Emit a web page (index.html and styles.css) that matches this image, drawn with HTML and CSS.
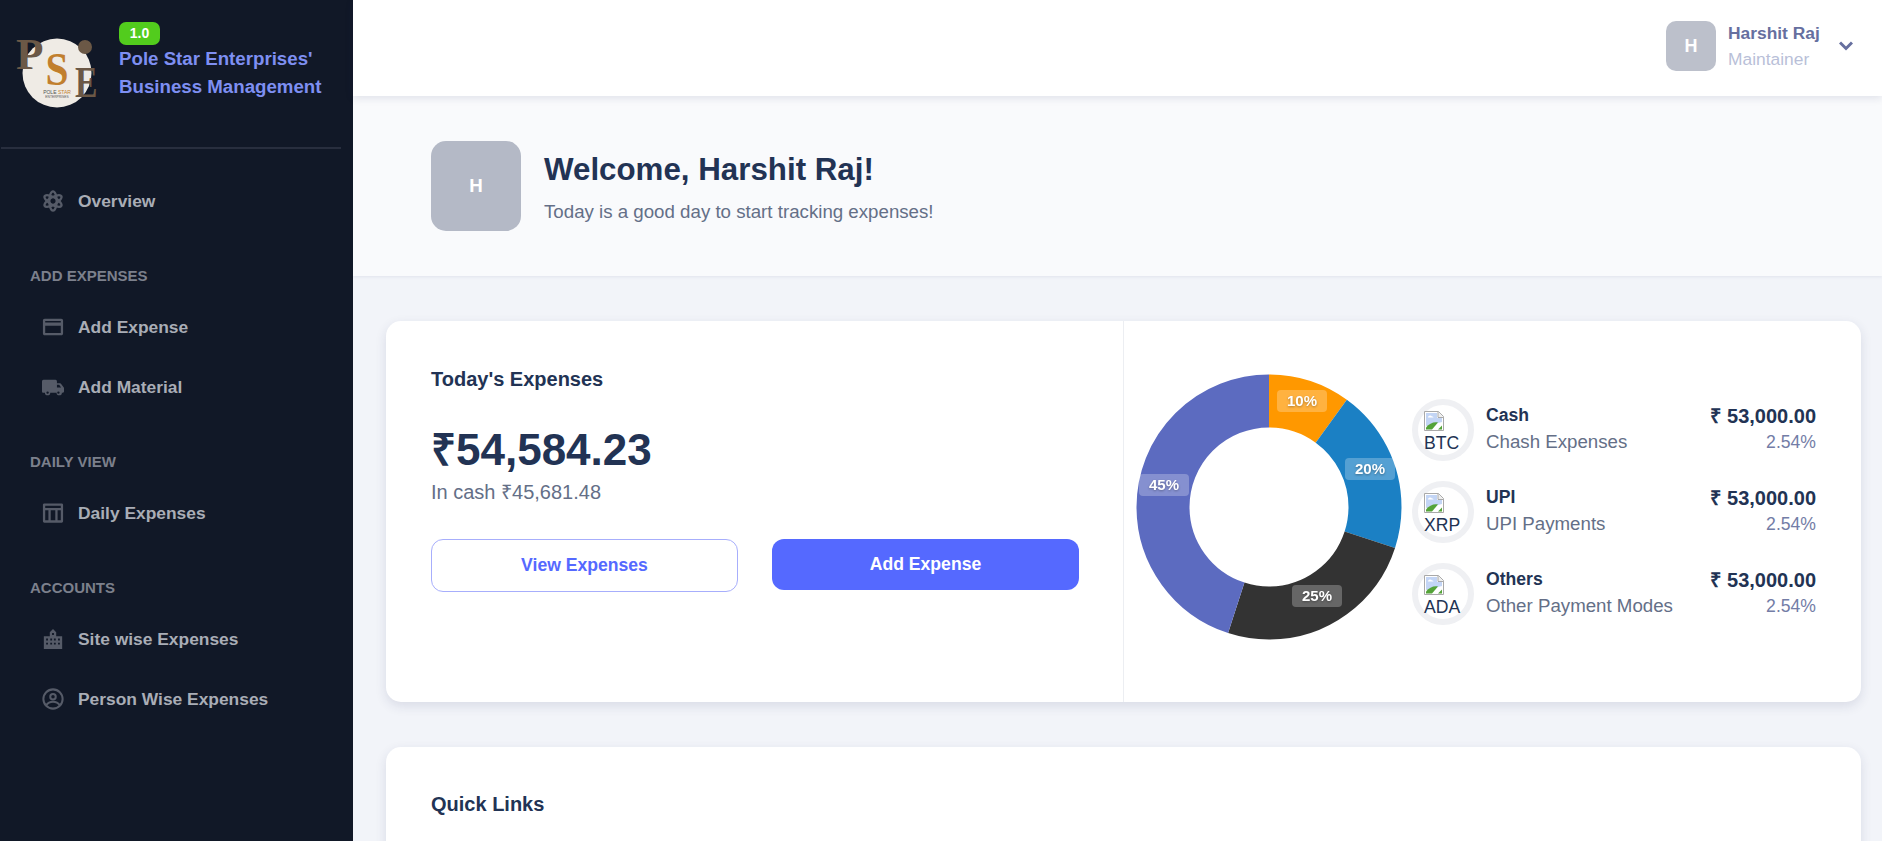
FILE: index.html
```html
<!DOCTYPE html>
<html>
	<head>
		<meta charset="utf-8">
		<title>Pole Star Enterprises' Business Management</title>
		<link rel="stylesheet" href="styles.css">
	</head>
	<body>
		<div class="sidebar">
			<div class="brand">
				<svg class="logo" width="84" height="78" viewBox="0 0 84 78">
					<circle cx="41" cy="41" r="34.5" fill="#efebe5"/>
					<circle cx="69" cy="15" r="7" fill="#6b5846"/>
					<text x="0" y="37" class="logo-big">P</text>
					<text transform="translate(59 65) scale(.75 1)" class="logo-big">E</text>
					<text transform="translate(41 53) scale(.9 1)" class="logo-s">S</text>
					<text x="41" y="62" class="logo-pole">POLE <tspan fill="#c17f2e">STAR</tspan></text>
					<text x="41" y="66" class="logo-ent">ENTERPRISES</text>
				</svg>
				<div class="brand-text">
					<span class="version">1.0</span>
					<div class="brand-name">Pole Star Enterprises'<br>Business Management</div>
				</div>
			</div>
			<div class="side-line"></div>

			<a href="#" class="nav-item first">
				<svg class="nav-icon" viewBox="0 0 24 24" fill="none" stroke="currentColor" stroke-width="2.500">
					<ellipse cx="12" cy="12" rx="4" ry="10.500"/>
					<ellipse cx="12" cy="12" rx="4" ry="10.500" transform="rotate(60 12 12)"/>
					<ellipse cx="12" cy="12" rx="4" ry="10.500" transform="rotate(120 12 12)"/>
				</svg>
				Overview
			</a>

			<div class="nav-label">ADD EXPENSES</div>
			<a href="#" class="nav-item">
				<svg class="nav-icon" viewBox="0 0 24 24" fill="currentColor"><path fill-rule="evenodd" d="M3 3h18c1.200 0 2 .8 2 2v14c0 1.200-.8 2-2 2H3c-1.200 0-2-.8-2-2V5c0-1.200.8-2 2-2zm.5 2.500V7h17V5.500h-17zm0 5v8h17v-8h-17z"/></svg>
				Add Expense
			</a>
			<a href="#" class="nav-item">
				<svg class="nav-icon" viewBox="0 0 24 24" fill="currentColor"><path d="M0 6c0-1 .7-1.800 1.700-1.800h13c1 0 1.600.8 1.600 1.800v2h3.400c.5 0 .9.200 1.200.6l2.700 3.700c.2.300.4.600.4 1V17c0 .7-.5 1.200-1.200 1.200h-1.100a2.900 2.900 0 0 1-5.800 0H9a2.900 2.900 0 0 1-5.800 0H1.400C.6 18.200 0 17.600 0 16.800V6zm16.300 3.600v3h4.500l-2.100-3h-2.400zM6.100 19.400a1.300 1.300 0 1 0 0-2.600 1.300 1.300 0 0 0 0 2.600zm11.800 0a1.300 1.300 0 1 0 0-2.600 1.300 1.300 0 0 0 0 2.600z" fill-rule="evenodd"/></svg>
				Add Material
			</a>

			<div class="nav-label">DAILY VIEW</div>
			<a href="#" class="nav-item">
				<svg class="nav-icon" viewBox="0 0 24 24" fill="currentColor"><path fill-rule="evenodd" d="M2.500 1.500h19c.8 0 1.500.7 1.500 1.500v18c0 .8-.7 1.500-1.500 1.500h-19c-.8 0-1.500-.7-1.500-1.500V3c0-.8.7-1.500 1.500-1.500zM3.500 4v2.500h17V4h-17zm0 5v11h3.500V9H3.500zm6 0v11h5V9h-5zm7.500 0v11h3.500V9H17z"/></svg>
				Daily Expenses
			</a>

			<div class="nav-label">ACCOUNTS</div>
			<a href="#" class="nav-item">
				<svg class="nav-icon" viewBox="0 0 24 24" fill="currentColor"><path fill-rule="evenodd" d="M12 1l3.500 3.500V9H22v14H2V9h6.500V4.500L12 1zM11 5.500v2h2v-2h-2zM4.500 11.500v2h2v-2h-2zm4.500 0v2h2v-2H9zm4 0v2h2v-2h-2zm4.500 0v2h2v-2h-2zM4.500 16v2h2v-2h-2zM9 16v2h2v-2H9zm4 0v2h2v-2h-2zm4.500 0v2h2v-2h-2z"/></svg>
				Site wise Expenses
			</a>
			<a href="#" class="nav-item">
				<svg class="nav-icon" viewBox="0 0 24 24" fill="none" stroke="currentColor" stroke-width="2.200">
					<circle cx="12" cy="12" r="10.500"/>
					<circle cx="12" cy="9.500" r="3"/>
					<path d="M4.500 19c2-3 4.500-4 7.500-4s5.500 1 7.500 4"/>
				</svg>
				Person Wise Expenses
			</a>
		</div>

		<div class="main">
			<div class="topbar">
				<div class="user-avatar">H</div>
				<div class="user-text">
					<div class="user-name">Harshit Raj</div>
					<div class="user-role">Maintainer</div>
				</div>
				<svg class="chevron" width="14" height="10" viewBox="0 0 14 10" fill="none" stroke="currentColor" stroke-width="3"><path d="M1 1.500l6 6 6-6"/></svg>
			</div>

			<div class="welcome">
				<div class="welcome-avatar">H</div>
				<div>
					<h1 class="welcome-title">Welcome, Harshit Raj!</h1>
					<p class="welcome-sub">Today is a good day to start tracking expenses!</p>
				</div>
			</div>

			<div class="content">
				<div class="card expenses-card">
					<div class="today">
						<h2 class="card-title">Today's Expenses</h2>
						<div class="amount">₹54,584.23</div>
						<div class="in-cash">In cash ₹45,681.48</div>
						<div class="buttons">
							<a href="#" class="btn btn-outline">View Expenses</a>
							<a href="#" class="btn btn-solid">Add Expense</a>
						</div>
					</div>
					<div class="breakdown">
						<svg class="donut" width="266" height="266" viewBox="0 0 266 266">
							<g transform="rotate(-90 133 133)" fill="none" stroke-width="53">
								<circle cx="133" cy="133" r="106" pathLength="100" stroke="#ff9800" stroke-dasharray="10 90"/>
								<circle cx="133" cy="133" r="106" pathLength="100" stroke="#1b80c4" stroke-dasharray="20 80" stroke-dashoffset="-10"/>
								<circle cx="133" cy="133" r="106" pathLength="100" stroke="#333333" stroke-dasharray="25 75" stroke-dashoffset="-30"/>
								<circle cx="133" cy="133" r="106" pathLength="100" stroke="#5c6bc0" stroke-dasharray="45 55" stroke-dashoffset="-55"/>
							</g>
							<rect class="tag" x="141" y="16" width="50" height="22" rx="4"/>
							<text class="tag-text" x="166" y="32">10%</text>
							<rect class="tag" x="209" y="84" width="50" height="22" rx="4"/>
							<text class="tag-text" x="234" y="100">20%</text>
							<rect class="tag" x="156" y="211" width="50" height="22" rx="4"/>
							<text class="tag-text" x="181" y="227">25%</text>
							<rect class="tag" x="3" y="100" width="50" height="22" rx="4"/>
							<text class="tag-text" x="28" y="116">45%</text>
						</svg>
						<div class="modes">
							<div class="mode">
								<div class="mode-ring">
									<svg class="broken" width="20" height="20" viewBox="0 0 20 20">
										<path d="M.5.500h14l5 5v14H.5z" fill="#fff" stroke="#a9a9a9"/>
										<path d="M14 .5v6h5.500" fill="#eee" stroke="#a9a9a9"/>
										<path d="M2 2h11v5h5v4L2 15z" fill="#c3d5f5"/>
										<path d="M2 18.500v-2c3-4 8-6 12-5l-6 7z" fill="#54a338"/>
										<path d="M14 18.500l4-4v4z" fill="#54a338"/>
										<path d="M4 6c1-2 3-2 4-.5 1 0 1.500.5 1.500 1H4z" fill="#fff"/>
									</svg>
									<div class="alt">BTC</div>
								</div>
								<div class="mode-text">
									<div class="mode-name">Cash</div>
									<div class="mode-sub">Chash Expenses</div>
								</div>
								<div class="mode-nums">
									<div class="mode-amount">₹ 53,000.00</div>
									<div class="mode-pct">2.54%</div>
								</div>
							</div>
							<div class="mode">
								<div class="mode-ring">
									<svg class="broken" width="20" height="20" viewBox="0 0 20 20">
										<path d="M.5.500h14l5 5v14H.5z" fill="#fff" stroke="#a9a9a9"/>
										<path d="M14 .5v6h5.500" fill="#eee" stroke="#a9a9a9"/>
										<path d="M2 2h11v5h5v4L2 15z" fill="#c3d5f5"/>
										<path d="M2 18.500v-2c3-4 8-6 12-5l-6 7z" fill="#54a338"/>
										<path d="M14 18.500l4-4v4z" fill="#54a338"/>
										<path d="M4 6c1-2 3-2 4-.5 1 0 1.500.5 1.500 1H4z" fill="#fff"/>
									</svg>
									<div class="alt">XRP</div>
								</div>
								<div class="mode-text">
									<div class="mode-name">UPI</div>
									<div class="mode-sub">UPI Payments</div>
								</div>
								<div class="mode-nums">
									<div class="mode-amount">₹ 53,000.00</div>
									<div class="mode-pct">2.54%</div>
								</div>
							</div>
							<div class="mode">
								<div class="mode-ring">
									<svg class="broken" width="20" height="20" viewBox="0 0 20 20">
										<path d="M.5.500h14l5 5v14H.5z" fill="#fff" stroke="#a9a9a9"/>
										<path d="M14 .5v6h5.500" fill="#eee" stroke="#a9a9a9"/>
										<path d="M2 2h11v5h5v4L2 15z" fill="#c3d5f5"/>
										<path d="M2 18.500v-2c3-4 8-6 12-5l-6 7z" fill="#54a338"/>
										<path d="M14 18.500l4-4v4z" fill="#54a338"/>
										<path d="M4 6c1-2 3-2 4-.5 1 0 1.500.5 1.500 1H4z" fill="#fff"/>
									</svg>
									<div class="alt">ADA</div>
								</div>
								<div class="mode-text">
									<div class="mode-name">Others</div>
									<div class="mode-sub">Other Payment Modes</div>
								</div>
								<div class="mode-nums">
									<div class="mode-amount">₹ 53,000.00</div>
									<div class="mode-pct">2.54%</div>
								</div>
							</div>
						</div>
					</div>
				</div>

				<div class="card links-card">
					<h2 class="card-title">Quick Links</h2>
				</div>
			</div>
		</div>
	</body>
</html>
```

FILE: styles.css
```css
* {
	box-sizing: border-box;
}
html, body {
	height: 100%;
	overflow: hidden;
}
body {
	margin: 0;
	display: flex;
	font-family: "Liberation Sans", Arial, sans-serif;
	color: #223354;
	background: #f2f4f9;
}
h1, h2, p {
	margin: 0;
}
a {
	text-decoration: none;
}

.sidebar {
	width: 353px;
	flex: none;
	height: 100%;
	background: #111827;
}
.brand {
	height: 147px;
	display: flex;
	padding: 22px 0 0 16px;
}
.logo {
	margin-top: 10px;
	margin-right: 19px;
	flex: none;
	overflow: visible;
}
.logo-big {
	font-family: "Liberation Serif", serif;
	font-weight: bold;
	font-size: 45px;
	fill: #6b5846;
}
.logo-s {
	font-family: "Liberation Serif", serif;
	font-weight: bold;
	font-size: 46px;
	fill: #c17f2e;
	text-anchor: middle;
}
.logo-pole {
	font-size: 5px;
	fill: #555;
	text-anchor: middle;
}
.logo-ent {
	font-size: 3.300px;
	fill: #555;
	text-anchor: middle;
}
.version {
	display: block;
	width: 41px;
	height: 23px;
	line-height: 23px;
	background: #52cc1d;
	color: #fff;
	border-radius: 7px;
	text-align: center;
	font-size: 14px;
	font-weight: bold;
}
.brand-name {
	color: #7e8ff2;
	font-size: 18.700px;
	font-weight: bold;
	line-height: 28px;
}
.side-line {
	height: 2px;
	margin: 0 12px 0 1px;
	background: #282e3e;
}

.nav-item {
	height: 60px;
	display: flex;
	align-items: center;
	padding-left: 42px;
	color: #a9adb6;
	font-size: 17.400px;
	font-weight: bold;
}
.nav-item.first {
	margin-top: 22px;
}
.nav-icon {
	width: 22px;
	height: 22px;
	margin-right: 14px;
	color: #565b68;
	flex: none;
}
.nav-label {
	margin: 36px 0 12px 30px;
	height: 18px;
	line-height: 18px;
	color: #7c808c;
	font-size: 15px;
	font-weight: bold;
}

.main {
	flex: 1;
	min-width: 0;
}
.topbar {
	height: 96px;
	background: #fff;
	display: flex;
	align-items: center;
	padding: 0 0 4px 1313px;
	position: relative;
	box-shadow: 0 2px 8px rgba(30, 40, 90, 0.12);
}
.user-avatar {
	width: 50px;
	height: 50px;
	border-radius: 10px;
	background: #bcc0cb;
	color: #fff;
	font-weight: bold;
	font-size: 18px;
	line-height: 50px;
	text-align: center;
	margin-right: 12px;
}
.user-text {
	width: 111px;
}
.user-name {
	color: #666f9f;
	font-size: 17.400px;
	font-weight: bold;
	line-height: 26px;
}
.user-role {
	color: #b9bfd8;
	font-size: 17.400px;
	line-height: 26px;
}
.chevron {
	color: #666f9f;
}

.welcome {
	height: 180px;
	background: #f9fafc;
	display: flex;
	align-items: center;
	padding-left: 78px;
	box-shadow: 0 1px 3px rgba(30, 40, 90, 0.08);
}
.welcome-avatar {
	width: 90px;
	height: 90px;
	border-radius: 15px;
	background: #b4b9c6;
	color: #fff;
	font-weight: bold;
	font-size: 18.700px;
	line-height: 90px;
	text-align: center;
	margin-right: 23px;
}
.welcome-title {
	font-size: 31.300px;
	line-height: 44px;
	color: #223354;
}
.welcome-sub {
	margin-top: 7px;
	font-size: 18.700px;
	line-height: 26px;
	color: #646f87;
}

.content {
	padding: 45px 21px 0 33px;
}
.card {
	background: #fff;
	border-radius: 15px;
	box-shadow: 0 4px 12px rgba(30, 40, 90, 0.12);
}
.expenses-card {
	height: 381px;
	display: flex;
}
.today {
	width: 738px;
	flex: none;
	border-right: 1px solid #eceef2;
	padding: 46px 44px 0 45px;
}
.card-title {
	font-size: 20px;
	line-height: 24px;
	color: #223354;
}
.amount {
	margin-top: 31px;
	font-size: 44px;
	font-weight: bold;
	line-height: 56px;
}
.in-cash {
	margin-top: -1px;
	font-size: 20px;
	line-height: 30px;
	color: #646f87;
}
.buttons {
	display: flex;
	gap: 34px;
	margin-top: 32px;
	align-items: flex-start;
}
.btn {
	flex: 0 0 307px;
	border-radius: 12px;
	text-align: center;
	font-size: 17.600px;
	font-weight: bold;
}
.btn-outline {
	height: 53px;
	line-height: 51px;
	border: 1px solid #a7aefc;
	color: #5569ff;
}
.btn-solid {
	height: 51px;
	line-height: 51px;
	background: #5569ff;
	color: #fff;
}

.breakdown {
	flex: 1;
	display: flex;
	align-items: center;
	padding-left: 12px;
}
.donut {
	flex: none;
	margin-bottom: 10px;
}
.tag {
	fill: rgba(255, 255, 255, 0.25);
}
.tag-text {
	fill: #fff;
	font-size: 15px;
	font-weight: bold;
	text-anchor: middle;
	filter: drop-shadow(0 1px 1px rgba(0, 0, 0, 0.3));
}
.modes {
	flex: 1;
	padding: 0 45px 0 10px;
}
.mode {
	display: flex;
	height: 62px;
	margin-bottom: 20px;
	align-items: center;
}
.mode:last-child {
	margin-bottom: 0;
}
.mode-ring {
	width: 62px;
	height: 62px;
	border: 6px solid #eff0f3;
	border-radius: 50%;
	padding: 6px 0 0 6px;
	margin-right: 12px;
	flex: none;
}
.broken {
	display: block;
}
.alt {
	font-size: 17.600px;
	line-height: 25px;
	color: #223354;
}
.mode-text {
	flex: 1;
	margin-top: -2px;
}
.mode-name {
	font-size: 17.600px;
	font-weight: bold;
	line-height: 26px;
}
.mode-sub {
	font-size: 18.700px;
	line-height: 28px;
	color: #646f87;
}
.mode-nums {
	text-align: right;
	margin-top: -2px;
}
.mode-amount {
	font-size: 20px;
	font-weight: bold;
	line-height: 26px;
}
.mode-pct {
	font-size: 17.600px;
	line-height: 26px;
	color: #737da6;
}

.links-card {
	margin-top: 45px;
	height: 300px;
	padding: 45px;
}
```
